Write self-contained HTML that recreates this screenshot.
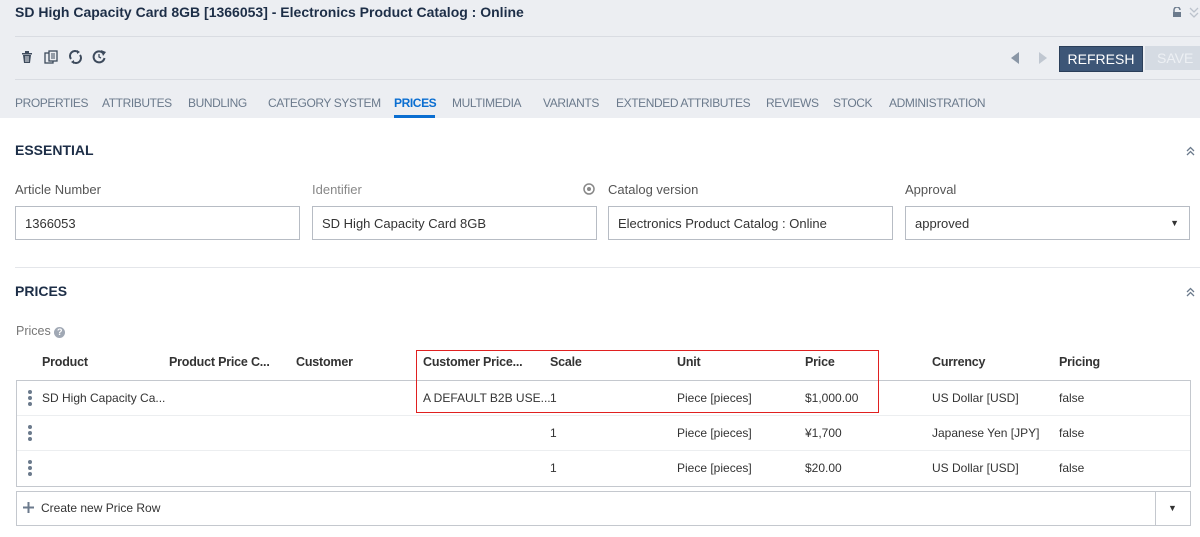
<html><head><style>
body{margin:0;width:1200px;height:537px;overflow:hidden;font-family:"Liberation Sans",sans-serif;background:#fff;color:#333;position:relative}
.a{position:absolute;white-space:nowrap}
.hd{position:absolute;left:0;top:0;width:1200px;height:118px;background:#eceef2}
.ln{position:absolute;left:15px;right:0;height:1px;background:#d9dce2}
.tab{font-size:12px;letter-spacing:-0.4px;color:#6b7a8c;top:96px}
.lbl{font-size:13px;color:#555;top:182px}
.in{position:absolute;top:206px;height:34px;border:1px solid #b7bcc4;background:#fff;font-size:13px;line-height:33px;padding-left:9px;box-sizing:border-box;color:#333}
.th{font-size:12.5px;letter-spacing:-0.2px;font-weight:bold;color:#333;top:355px}
.td{font-size:12px;color:#333}
.dots{position:absolute;left:28px;width:4px}
.dots i{display:block;width:4px;height:4px;border-radius:2px;background:#6b7a8c;margin-bottom:2px}
</style></head><body>
<div class="hd"></div>
<div class="a" style="left:15px;top:4px;font-size:14px;font-weight:bold;color:#1d2e47">SD High Capacity Card 8GB [1366053] - Electronics Product Catalog : Online</div>
<svg class="a" style="left:1172px;top:7px" width="10" height="10"><path d="M2 5V3a3 3 0 0 1 6 0" fill="none" stroke="#6b7a8c" stroke-width="1.5"/><rect x="1" y="5" width="8" height="5" fill="#6b7a8c"/></svg>
<svg class="a" style="left:1189px;top:7px" width="11" height="12"><path d="M1 1l4 4 4-4M1 6l4 4 4-4" fill="none" stroke="#bbc2cc" stroke-width="1.3"/></svg>
<div class="ln" style="top:36px"></div>
<svg class="a" style="left:21px;top:51px" width="12" height="13"><rect x="1" y="2" width="10" height="1.5" fill="#3d4a5c"/><rect x="4" y="0" width="4" height="2" fill="#3d4a5c"/><path d="M2 4h8l-1 8H3z" fill="#3d4a5c"/><path d="M5 5v6M7 5v6" stroke="#eceef2"/></svg>
<svg class="a" style="left:44px;top:50px" width="15" height="14"><rect x="1" y="3" width="8" height="10" fill="none" stroke="#3d4a5c" stroke-width="1.3"/><rect x="5" y="1" width="8" height="10" fill="#eceef2" stroke="#3d4a5c" stroke-width="1.3"/><path d="M7 4h4M7 6h4M7 8h4" stroke="#3d4a5c"/></svg>
<svg class="a" style="left:68px;top:50px" width="15" height="14"><path d="M3 9a5 5 0 0 1 7-7M12 5a5 5 0 0 1-7 7" fill="none" stroke="#3d4a5c" stroke-width="2"/><path d="M9 0l3 2-3 2zM6 10l-3 2 3 2z" fill="#3d4a5c"/></svg>
<svg class="a" style="left:92px;top:49px" width="15" height="15"><path d="M11 4A5.5 5.5 0 1 0 12.5 9" fill="none" stroke="#3d4a5c" stroke-width="2"/><path d="M9 1l5 2-3 4z" fill="#3d4a5c"/><path d="M7 5v3l2 1" fill="none" stroke="#3d4a5c" stroke-width="1.3"/></svg>
<svg class="a" style="left:1011px;top:52px" width="8" height="12"><path d="M8 0v12L0 6z" fill="#8a96a6"/></svg>
<svg class="a" style="left:1039px;top:52px" width="8" height="12"><path d="M0 0v12l8-6z" fill="#c0c7d1"/></svg>
<div class="a" style="left:1059px;top:46px;width:82px;height:24px;background:#3d5677;border:1px solid #2b3f5a;color:#fff;font-size:14px;text-align:center;line-height:24px">REFRESH</div>
<div class="a" style="left:1145px;top:46px;width:55px;height:24px;background:#d5dbe3;color:#edf0f4;font-size:14px;line-height:24px;padding-left:12px;box-sizing:border-box">SAVE</div>
<div class="ln" style="top:79px"></div>
<div class="a tab" style="left:15px">PROPERTIES</div>
<div class="a tab" style="left:102px">ATTRIBUTES</div>
<div class="a tab" style="left:188px">BUNDLING</div>
<div class="a tab" style="left:268px">CATEGORY SYSTEM</div>
<div class="a tab" style="left:394px;color:#0a6ed1;font-weight:bold">PRICES</div>
<div class="a" style="left:394px;top:115px;width:41px;height:3px;background:#0a6ed1"></div>
<div class="a tab" style="left:452px">MULTIMEDIA</div>
<div class="a tab" style="left:543px">VARIANTS</div>
<div class="a tab" style="left:616px">EXTENDED ATTRIBUTES</div>
<div class="a tab" style="left:766px">REVIEWS</div>
<div class="a tab" style="left:833px">STOCK</div>
<div class="a tab" style="left:889px">ADMINISTRATION</div>

<div class="a" style="left:15px;top:142px;font-size:14px;font-weight:bold;color:#1d2e47">ESSENTIAL</div>
<svg class="a" style="left:1186px;top:146px" width="9" height="10"><path d="M1 5l3.5-3.5L8 5M1 9l3.5-3.5L8 9" fill="none" stroke="#6b7a8c" stroke-width="1.3"/></svg>
<div class="a lbl" style="left:15px">Article Number</div>
<div class="a lbl" style="left:312px;color:#888">Identifier</div>
<svg class="a" style="left:583px;top:183px" width="12" height="12"><circle cx="6" cy="6" r="5" fill="none" stroke="#888" stroke-width="1.5"/><circle cx="6" cy="6" r="2" fill="#888"/></svg>
<div class="a lbl" style="left:608px">Catalog version</div>
<div class="a lbl" style="left:905px">Approval</div>
<div class="in" style="left:15px;width:285px">1366053</div>
<div class="in" style="left:312px;width:285px">SD High Capacity Card 8GB</div>
<div class="in" style="left:608px;width:285px">Electronics Product Catalog : Online</div>
<div class="in" style="left:905px;width:285px">approved<span style="position:absolute;right:10px;font-size:9px;color:#333">&#9660;</span></div>
<div class="ln" style="top:267px;background:#e4e6ea"></div>
<div class="a" style="left:15px;top:283px;font-size:14px;font-weight:bold;color:#1d2e47">PRICES</div>
<svg class="a" style="left:1186px;top:287px" width="9" height="10"><path d="M1 5l3.5-3.5L8 5M1 9l3.5-3.5L8 9" fill="none" stroke="#6b7a8c" stroke-width="1.3"/></svg>
<div class="a" style="left:16px;top:324px;font-size:12.5px;color:#777">Prices <span style="display:inline-block;width:11px;height:11px;border-radius:6px;background:#a0a8b4;color:#fff;font-size:9px;text-align:center;line-height:11px;font-weight:bold">?</span></div>

<div class="a th" style="left:42px">Product</div>
<div class="a th" style="left:169px">Product Price C...</div>
<div class="a th" style="left:296px">Customer</div>
<div class="a th" style="left:423px">Customer Price...</div>
<div class="a th" style="left:550px">Scale</div>
<div class="a th" style="left:677px">Unit</div>
<div class="a th" style="left:805px">Price</div>
<div class="a th" style="left:932px">Currency</div>
<div class="a th" style="left:1059px">Pricing</div>

<div class="a" style="left:16px;top:380px;width:1173px;height:105px;border:1px solid #c4c8ce"></div>
<div class="a" style="left:17px;top:415px;width:1173px;height:1px;background:#eceef0"></div>
<div class="a" style="left:17px;top:450px;width:1173px;height:1px;background:#eceef0"></div>
<div class="dots" style="top:390px"><i></i><i></i><i></i></div>
<div class="dots" style="top:425px"><i></i><i></i><i></i></div>
<div class="dots" style="top:460px"><i></i><i></i><i></i></div>
<div class="a td" style="left:42px;top:391px">SD High Capacity Ca...</div>
<div class="a td" style="left:423px;top:391px">A DEFAULT B2B USE...</div>
<div class="a td" style="left:550px;top:391px">1</div>
<div class="a td" style="left:677px;top:391px">Piece [pieces]</div>
<div class="a td" style="left:805px;top:391px">$1,000.00</div>
<div class="a td" style="left:932px;top:391px">US Dollar [USD]</div>
<div class="a td" style="left:1059px;top:391px">false</div>
<div class="a td" style="left:550px;top:426px">1</div>
<div class="a td" style="left:677px;top:426px">Piece [pieces]</div>
<div class="a td" style="left:805px;top:426px">¥1,700</div>
<div class="a td" style="left:932px;top:426px">Japanese Yen [JPY]</div>
<div class="a td" style="left:1059px;top:426px">false</div>
<div class="a td" style="left:550px;top:461px">1</div>
<div class="a td" style="left:677px;top:461px">Piece [pieces]</div>
<div class="a td" style="left:805px;top:461px">$20.00</div>
<div class="a td" style="left:932px;top:461px">US Dollar [USD]</div>
<div class="a td" style="left:1059px;top:461px">false</div>

<div class="a" style="left:416px;top:350px;width:461px;height:61px;border:1.5px solid #e02020"></div>

<div class="a" style="left:16px;top:491px;width:1173px;height:33px;border:1px solid #c4c8ce"></div>
<div class="a" style="left:1155px;top:492px;width:1px;height:33px;background:#c4c8ce"></div>
<svg class="a" style="left:23px;top:502px" width="11" height="11"><path d="M5.5 0v11M0 5.5h11" stroke="#6b7a8c" stroke-width="2"/></svg>
<div class="a td" style="left:41px;top:501px">Create new Price Row</div>
<div class="a" style="left:1168px;top:503px;font-size:9px;color:#333">&#9660;</div>
</body></html>
